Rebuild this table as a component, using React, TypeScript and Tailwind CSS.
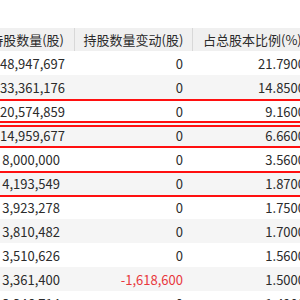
import React from "react";

const rows: { a: string; b: string; c: string; neg?: boolean; box?: string }[] = [
  { a: "48,947,697", b: "0", c: "21.7900" },
  { a: "33,361,176", b: "0", c: "14.8500" },
  { a: "20,574,859", b: "0", c: "9.1600", box: "top-[0px] bottom-[0px]" },
  { a: "14,959,677", b: "0", c: "6.6600", box: "top-[2px] bottom-[-1px]" },
  { a: "8,000,000", b: "0", c: "3.5600" },
  { a: "4,193,549", b: "0", c: "1.8700", box: "top-[0px] bottom-[-2px]" },
  { a: "3,923,278", b: "0", c: "1.7500" },
  { a: "3,810,482", b: "0", c: "1.7000" },
  { a: "3,510,626", b: "0", c: "1.5600" },
  { a: "3,361,400", b: "-1,618,600", c: "1.5000", neg: true },
  { a: "3,346,714", b: "0", c: "1.4900" },
];

export default function App() {
  return (
    <div
      className="w-[300px] h-[300px] overflow-hidden bg-white text-[13px] text-[#2b2b2b]"
      style={{ fontFamily: '"Noto Sans CJK SC", "Noto Sans", sans-serif' }}
    >
      <div className="w-[320px] pt-[28px]">
        <div className="flex h-[23px] items-center bg-[#f0f0f0] leading-none">
          <div className="w-[75px] shrink-0 flex justify-end pr-[10px] whitespace-nowrap border-r border-[#d8d8d8] h-full items-center">
            持股数量(股)
          </div>
          <div className="w-[118px] shrink-0 flex justify-center whitespace-nowrap border-r border-[#d8d8d8] h-full items-center">
            持股数量变动(股)
          </div>
          <div className="flex-1 pl-[10px] whitespace-nowrap">占总股本比例(%)</div>
        </div>
        {rows.map((r, i) => (
          <div
            key={i}
            className={`relative flex h-[24px] items-center leading-none ${i % 2 === 1 ? "bg-[#f5f5f5]" : "bg-white"}`}
          >
            <div className="w-[75px] shrink-0 text-right pr-[15px] whitespace-nowrap">{r.a}</div>
            <div className={`w-[118px] shrink-0 text-right pr-[10px] whitespace-nowrap ${r.neg ? "text-[#e8383d]" : ""}`}>{r.b}</div>
            <div className="w-[115px] shrink-0 text-right pr-[3px] whitespace-nowrap">{r.c}</div>
            {r.box && (
              <div className={`absolute z-10 left-[-10px] right-[-10px] border-2 border-[#ff1010] ${r.box}`} />
            )}
          </div>
        ))}
      </div>
    </div>
  );
}
